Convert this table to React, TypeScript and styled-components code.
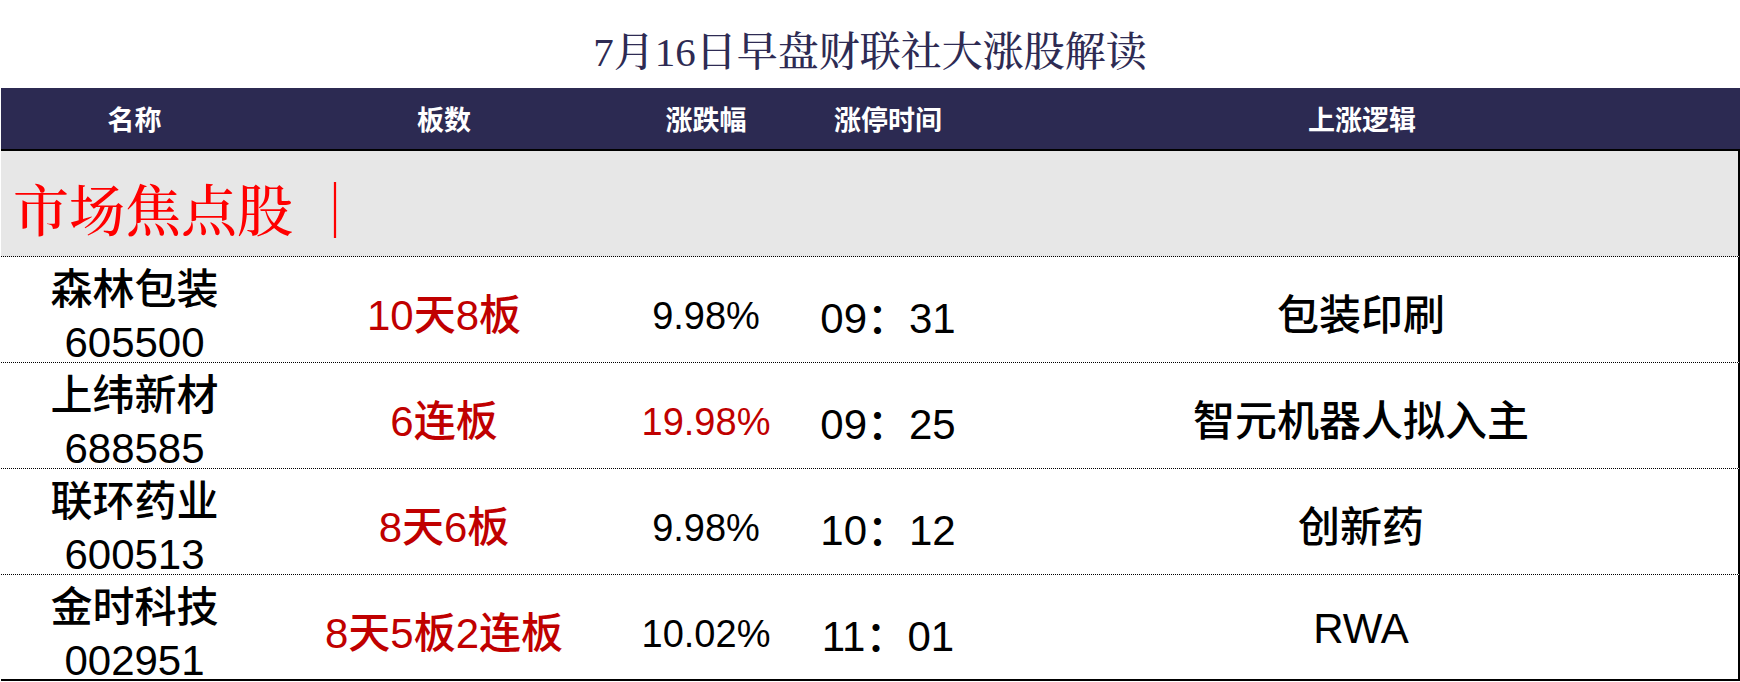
import React from 'react';
import styled, { createGlobalStyle } from 'styled-components';

interface Stock {
  name: string;
  code: string;
  board: string;
  change: string;
  hot: boolean;
  time: string;
  logic: string;
}

const stocks: Stock[] = [
  { name: '森林包装', code: '605500', board: '10天8板', change: '9.98%', hot: false, time: '09：31', logic: '包装印刷' },
  { name: '上纬新材', code: '688585', board: '6连板', change: '19.98%', hot: true, time: '09：25', logic: '智元机器人拟入主' },
  { name: '联环药业', code: '600513', board: '8天6板', change: '9.98%', hot: false, time: '10：12', logic: '创新药' },
  { name: '金时科技', code: '002951', board: '8天5板2连板', change: '10.02%', hot: false, time: '11：01', logic: 'RWA' },
];

const GlobalStyle = createGlobalStyle`
  html, body {
    margin: 0;
    padding: 0;
    background: #fff;
  }
  body {
    font-family: "Liberation Sans", "Noto Sans CJK SC", sans-serif;
  }
`;

const COLUMNS = '267px 352px 172px 192px 1fr';

const Page = styled.div`
  width: 1740px;
`;

const Title = styled.h1`
  margin: 0;
  height: 88px;
  box-sizing: border-box;
  padding-top: 8px;
  display: flex;
  align-items: center;
  justify-content: center;
  font-family: "Liberation Serif", "Noto Serif CJK SC", "Noto Sans CJK SC", serif;
  font-weight: 500;
  font-size: 41px;
  color: #2e2b53;
`;

const Table = styled.div`
  margin-left: 1px;
`;

const HeaderRow = styled.div`
  display: grid;
  grid-template-columns: ${COLUMNS};
  align-items: center;
  height: 63px;
  box-sizing: border-box;
  background: #2c2a52;
  border-bottom: 2px solid #000;
  color: #fff;
  font-family: "Noto Sans CJK SC", sans-serif;
  font-weight: bold;
  font-size: 27px;
  text-align: center;
`;

const Section = styled.div`
  height: 106px;
  box-sizing: border-box;
  display: flex;
  align-items: center;
  padding: 6px 0 0 12px;
  background: #e7e7e7;
  border-right: 2px solid #000;
  border-bottom: 1px dotted #000;
  font-family: "Liberation Serif", "Noto Serif CJK SC", "Noto Sans CJK SC", serif;
  font-weight: 500;
  font-size: 56px;
  color: #ff0000;
`;

const Row = styled.div<{ $last: boolean }>`
  display: grid;
  grid-template-columns: ${COLUMNS};
  align-items: center;
  height: 106px;
  box-sizing: border-box;
  border-right: 2px solid #000;
  border-bottom: ${({ $last }) => ($last ? '2px solid #000' : '1px dotted #000')};
  text-align: center;
  color: #000;
  font-weight: 500;
`;

const NameCell = styled.div`
  display: flex;
  flex-direction: column;
  padding-top: 6px;
  font-size: 42px;
  line-height: 53px;
`;

const BoardCell = styled.div`
  font-size: 42px;
  color: #c00000;
  margin-top: -4px;
`;

const ChangeCell = styled.div<{ $hot: boolean }>`
  font-size: 38px;
  color: ${({ $hot }) => ($hot ? '#c00000' : '#000')};
  padding-top: 6px;
`;

const TimeCell = styled.div`
  font-size: 42px;
  padding-top: 2px;
`;

const LogicCell = styled.div`
  font-size: 42px;
  margin-top: -4px;
`;

export default function App() {
  return (
    <Page>
      <GlobalStyle />
      <Title>7月16日早盘财联社大涨股解读</Title>
      <Table>
        <HeaderRow>
          <div>名称</div>
          <div>板数</div>
          <div>涨跌幅</div>
          <div>涨停时间</div>
          <div>上涨逻辑</div>
        </HeaderRow>
        <Section>市场焦点股 ｜</Section>
        {stocks.map((s, i) => (
          <Row key={s.code} $last={i === stocks.length - 1}>
            <NameCell>
              <span>{s.name}</span>
              <span>{s.code}</span>
            </NameCell>
            <BoardCell>{s.board}</BoardCell>
            <ChangeCell $hot={s.hot}>{s.change}</ChangeCell>
            <TimeCell>{s.time}</TimeCell>
            <LogicCell>{s.logic}</LogicCell>
          </Row>
        ))}
      </Table>
    </Page>
  );
}
